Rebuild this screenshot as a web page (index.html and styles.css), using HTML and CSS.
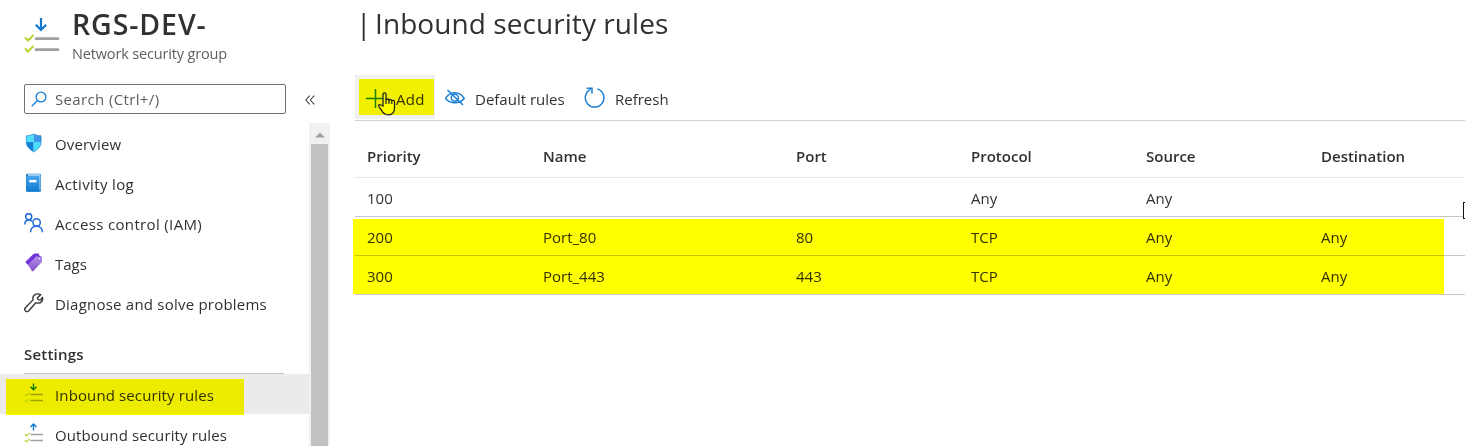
FILE: index.html
```html
<!DOCTYPE html>
<html lang="en">
<head>
<meta charset="utf-8">
<title>Inbound security rules</title>
<link rel="stylesheet" href="styles.css">
</head>
<body>
<svg width="0" height="0" class="defs">
  <defs>
    <linearGradient id="book" x1="0" y1="0" x2="0" y2="1"><stop offset="0" stop-color="#4aa5ee"/><stop offset="1" stop-color="#0f7cd4"/></linearGradient>
    <linearGradient id="tag" x1="0" y1="0" x2="0" y2="1"><stop offset="0" stop-color="#b695ec"/><stop offset="1" stop-color="#8250c8"/></linearGradient>
  </defs>
</svg>
<div class="app">
  <aside class="sidebar">
    <header class="resource">
      <svg class="resource-icon" width="36" height="38" viewBox="0 0 36 38" fill="none">
        <path d="M17 3v12M11.800 9.800 17 15l5.200-5.200" stroke="#0f78d0" stroke-width="2.200"/>
        <path d="M12 23.700H34M12 34.700H34" stroke="#a0a0a0" stroke-width="2.800" stroke-linecap="round"/>
        <path d="m1 22.500 3 3 5.500-5.500M1 33.500l3 3 5.500-5.500" stroke="#b4d430" stroke-width="2"/>
      </svg>
      <div class="resource-text">
        <h1 class="resource-name">RGS-DEV-</h1>
        <p class="resource-type">Network security group</p>
      </div>
    </header>
    <div class="search-row">
      <div class="search">
        <svg width="16" height="16" viewBox="0 0 16 16" fill="none" stroke="#1b7fd6" stroke-width="1.300"><circle cx="10" cy="6" r="4.900"/><path d="M6.500 9.500.7 15.300"/></svg>
        <span class="search-text">Search (Ctrl+/)</span>
      </div>
      <svg class="collapse" width="10" height="10" viewBox="0 0 10 10" fill="none" stroke="#444" stroke-width="1.100"><path d="M4.800.6.800 5l4 4.400M9.300.6 5.300 5l4 4.400"/></svg>
    </div>
    <div class="menu-area">
      <nav class="menu">
        <a class="item overview"><svg class="icon" width="20" height="20" viewBox="0 0 20 20">
          <g transform="translate(.5 0) scale(.92 .95)"><path d="M10 1C7.500 2.500 4.500 2.800 2 3v6.500h8z" fill="#4ee3fa"/><path d="M10 1c2.500 1.500 5.500 1.800 8 2v6.500h-8z" fill="#3f95e8"/>
          <path d="M2 9.500C2 15 6.500 17.500 10 20V9.500z" fill="#1580d8"/><path d="M18 9.500c0 5.500-4.500 8-8 10.500V9.500z" fill="#48dcf8"/><path d="M10 1c2.500 1.500 5.500 1.800 8 2v6.500C18 15 13.500 17.500 10 20 6.500 17.500 2 15 2 9.500V3c2.500-.2 5.500-.5 8-2z" fill="none" stroke="#2385d8" stroke-width=".8"/></g></svg><span>Overview</span></a>
        <a class="item activity"><svg class="icon" width="20" height="20" viewBox="0 0 20 20">
          <rect x="2" y=".7" width="15" height="18" rx="1.300" fill="#1470b8"/><rect x="3.800" y="1.300" width="12.600" height="16" rx=".6" fill="#d8ecfa"/><path d="M2.300 2.500h13.300v16H3.500a1.200 1.200 0 0 1-1.200-1.200z" fill="url(#book)"/><rect x="5.300" y="6.900" width="7.200" height="2.400" fill="#fff"/></svg><span>Activity log</span></a>
        <a class="item access"><svg class="icon" width="20" height="20" viewBox="0 0 20 20" fill="none" stroke="#1e69dc" stroke-width="1.500">
          <circle cx="4.700" cy="3.700" r="3"/><path d="M.8 11.500c0-3 1.700-4.600 4.100-4.600 1.500 0 2.500.5 3.200 1.400"/><circle cx="12.600" cy="9.500" r="3.700"/><path d="M6.500 19.200c.2-3.800 2.800-5.900 6-5.900s5.800 2.100 6 5.900"/></svg><span>Access control (IAM)</span></a>
        <a class="item tags"><svg class="icon" width="20" height="20" viewBox="0 0 20 20">
          <g transform="translate(0 -.8)"><path d="M2 9 9.500 1.700Q10 1.200 11 1.200h4l.5 3L6.300 15 2 10.700Q1.200 9.900 2 9z" fill="#7433dc"/><path d="m4 12.500 9-9 4 .200q1 0 1 1V9q0 .8-.6 1.400l-8 8.300q-.7.700-1.500 0z" fill="url(#tag)"/><path d="M13 2.500l3 3" stroke="#7433dc" stroke-width="1.500"/><circle cx="15.300" cy="6.300" r="1.300" fill="#fff" stroke="#8250c8" stroke-width=".7"/></g></svg><span>Tags</span></a>
        <a class="item diagnose"><svg class="icon" width="20" height="20" viewBox="0 0 20 20" fill="none" stroke="#333" stroke-width="1.350" stroke-linejoin="round">
          <path d="M16.800 1.600 13.300 5.100l1.200 1.800 2.200-.1 1.800-2.400c.8 3-1.300 6-4.700 5.700-.8 0-1.400-.2-2-.4L4.800 17.800c-2.200 2.100-5.400-.8-3.400-3.100l7.600-7.800C7.900 2.800 11.800-.6 16.800 1.600z"/></svg><span>Diagnose and solve problems</span></a>
        <h2 class="section">Settings</h2>
        <a class="item rules-in selected"><svg class="icon" width="20" height="20" viewBox="0 0 20 20" fill="none">
          <path d="M9.500.500v6M6.500 3.800l3 3 3-3" stroke="#0f78d0" stroke-width="1.400"/><path d="M6.500 11.500H19M6.500 17.500H19" stroke="#a0a0a0" stroke-width="1.500"/><path d="m.8 11.200 1.700 1.700 3-3M.8 17.200l1.700 1.700 3-3" stroke="#b4d430" stroke-width="1.200"/></svg><span>Inbound security rules</span></a>
        <a class="item rules-out"><svg class="icon" width="20" height="20" viewBox="0 0 20 20" fill="none">
          <path d="M9.500 7.500V1M6.500 4l3-3 3 3" stroke="#0f78d0" stroke-width="1.400"/><path d="M6.500 11.500H19M6.500 17.500H19" stroke="#a0a0a0" stroke-width="1.500"/><path d="m.8 11.200 1.700 1.700 3-3M.8 17.200l1.700 1.700 3-3" stroke="#b4d430" stroke-width="1.200"/></svg><span>Outbound security rules</span></a>
      </nav>
      <div class="scrollbar"><svg class="arrow" width="10" height="6" viewBox="0 0 10 6"><path d="M0 5.500 5 .5l5 5z" fill="#a0a0a0"/></svg><div class="thumb"></div></div>
    </div>
  </aside>
  <main class="main">
    <h2 class="page-title"><span class="bar">|</span>Inbound security rules</h2>
    <div class="toolbar">
      <button class="tool add">
        <svg width="20" height="20" viewBox="0 0 20 20" stroke="#1b7fd6" stroke-width="1.500"><path d="M0 10.500h19M9.500 1v19"/></svg>
        <span>Add</span>
      </button>
      <button class="tool defaults">
        <svg width="20" height="20" viewBox="0 0 20 20" fill="none" stroke="#1b7fd6" stroke-width="1.500"><path d="M.5 10.500C3 6.500 6 4.800 9.800 4.800s7 1.700 9.400 5.700c-2.400 3-5.500 4.300-9.300 4.300S2.800 13.500.5 10.500z"/><circle cx="9.800" cy="9.800" r="3.500"/><path d="m2.500 2 15.500 15"/></svg>
        <span>Default rules</span>
      </button>
      <button class="tool refresh">
        <svg width="21" height="21" viewBox="0 0 21 21" fill="none" stroke="#1b7fd6" stroke-width="1.500"><path d="M13.300 1.900a9.300 9.300 0 1 1-6.700.5"/><path d="M2.500 1.200H8v5.300"/></svg>
        <span>Refresh</span>
      </button>
    </div>
    <div class="table">
      <div class="row head"><span>Priority</span><span>Name</span><span>Port</span><span>Protocol</span><span>Source</span><span>Destination</span></div>
      <div class="row"><span>100</span><span></span><span></span><span>Any</span><span>Any</span><span></span></div>
      <div class="row"><span>200</span><span>Port_80</span><span>80</span><span>TCP</span><span>Any</span><span>Any</span></div>
      <div class="row"><span>300</span><span>Port_443</span><span>443</span><span>TCP</span><span>Any</span><span>Any</span></div>
    </div>
  </main>
</div>
<div class="mark mark-menu"></div>
<div class="mark mark-add"></div>
<div class="mark mark-rows"></div>
<svg class="pointer" width="18" height="24" viewBox="0 0 18 24"><path d="M5 14V2.500C5 .3 8 .3 8 2.500V8c.3-1.400 2.500-1.400 3 .3.500-1.200 2.500-1 2.800.600.700-1 2.700-.6 2.700 1.300v5.600c0 4-2 7-6 7-3.500 0-5.500-1.500-7-4.500L.9 14.500c-.8-1.700.6-2.500 2-1.500z" fill="#ff0" stroke="#222" stroke-width="1.300"/><path d="M8 7v5M11 8.500V12M13.800 9.500V12" stroke="#222" stroke-width="1.200"/></svg>
<div class="edge-mark"></div>
</body>
</html>
```
FILE: styles.css
```css
* { box-sizing: border-box; }
body { margin: 0; width: 1465px; height: 446px; overflow: hidden; position: relative; background: #fff; color: #323130; font: 15px/20px "Open Sans", "Noto Sans", sans-serif; }
h1, h2, p { margin: 0; font-weight: 400; }
svg { display: block; flex: none; }
.defs { position: absolute; }
.app { display: flex; height: 446px; }
.sidebar { width: 330px; flex: none; display: flex; flex-direction: column; }
.resource { height: 84px; flex: none; display: flex; padding: 15px 0 0 24px; gap: 12px; }
.resource-name { font-size: 28.500px; line-height: 34px; font-weight: 600; margin-top: -8px; letter-spacing: .9px; white-space: nowrap; }
.resource-type { color: #605e5c; font-size: 14.500px; line-height: 20px; margin-top: 3px; letter-spacing: -.16px; white-space: nowrap; }
.search-row { display: flex; align-items: center; height: 30px; flex: none; padding-left: 24px; gap: 19px; }
.search { width: 262px; height: 30px; border: 1px solid #74726f; border-radius: 2px; display: flex; align-items: center; padding-left: 6px; gap: 8px; color: #605e5c; letter-spacing: .36px; }
.collapse { margin-top: 2px; }
.menu-area { display: flex; flex: 1; min-height: 0; padding-top: 9px; }
.menu { width: 309px; overflow: hidden; padding-top: 1px; }
.item { display: flex; height: 40px; align-items: center; padding-left: 24px; gap: 11px; white-space: nowrap; }
.overview { letter-spacing: .15px; }
.activity, .access { letter-spacing: .35px; }
.diagnose { letter-spacing: .22px; }
.rules-in, .rules-out { letter-spacing: .12px; padding-top: 2px; }
.icon { margin-top: -3px; }
.rules-in .icon, .rules-out .icon { margin-top: -4px; }
.section { height: 50px; margin: 0 25px 0 24px; padding-top: 20px; border-bottom: 1px solid #c4c2c0; font-size: 15px; line-height: 20px; font-weight: 600; letter-spacing: .2px; }
.selected { background: #edebe9; }
.scrollbar { width: 21px; background: #f1f1f1; display: flex; flex-direction: column; align-items: center; }
.arrow { margin: 9px 0 6px; }
.thumb { width: 17px; flex: 1; background: #c1c1c1; }
.main { flex: 1; min-width: 0; padding-left: 25px; }
.page-title { height: 75px; padding: 5px 0 0 1px; font-size: 28px; line-height: 36px; letter-spacing: .07px; white-space: nowrap; display: flex; }
.bar { width: 19px; flex: none; }
.toolbar { display: flex; height: 46px; border-bottom: 1px solid #d2d0ce; }
.tool { display: flex; align-items: center; border: 0; padding: 0; background: none; font: inherit; color: inherit; height: 44px; padding-top: 4px; white-space: nowrap; }
.add { width: 80px; background: #f0f0f0; padding-left: 11px; gap: 10px; letter-spacing: .3px; }
.defaults { width: 140px; padding-left: 10px; gap: 10px; }
.refresh { padding-left: 9px; gap: 10px; }
.tool svg { margin-top: -3px; }
.row { display: grid; grid-template-columns: 176px 253px 175px 175px 175px 1fr; height: 39px; align-items: center; padding: 2px 0 0 12px; border-bottom: 1px solid #c8c6c4; }
.head { height: 57px; font-weight: 600; padding-top: 14px; border-color: #e8e6e4; }
.row span { white-space: nowrap; }
.mark { position: absolute; background: #ff0; mix-blend-mode: multiply; }
.mark-menu { left: 6px; top: 379px; width: 238px; height: 36px; }
.mark-add { left: 359px; top: 79px; width: 75px; height: 36px; }
.mark-rows { left: 353px; top: 219px; width: 1091px; height: 75px; }
.pointer { position: absolute; left: 378px; top: 92px; }
.edge-mark { position: absolute; left: 1463px; top: 202px; width: 2px; height: 17px; border: 1px solid #111; border-right: 0; background: #fff; }
```
